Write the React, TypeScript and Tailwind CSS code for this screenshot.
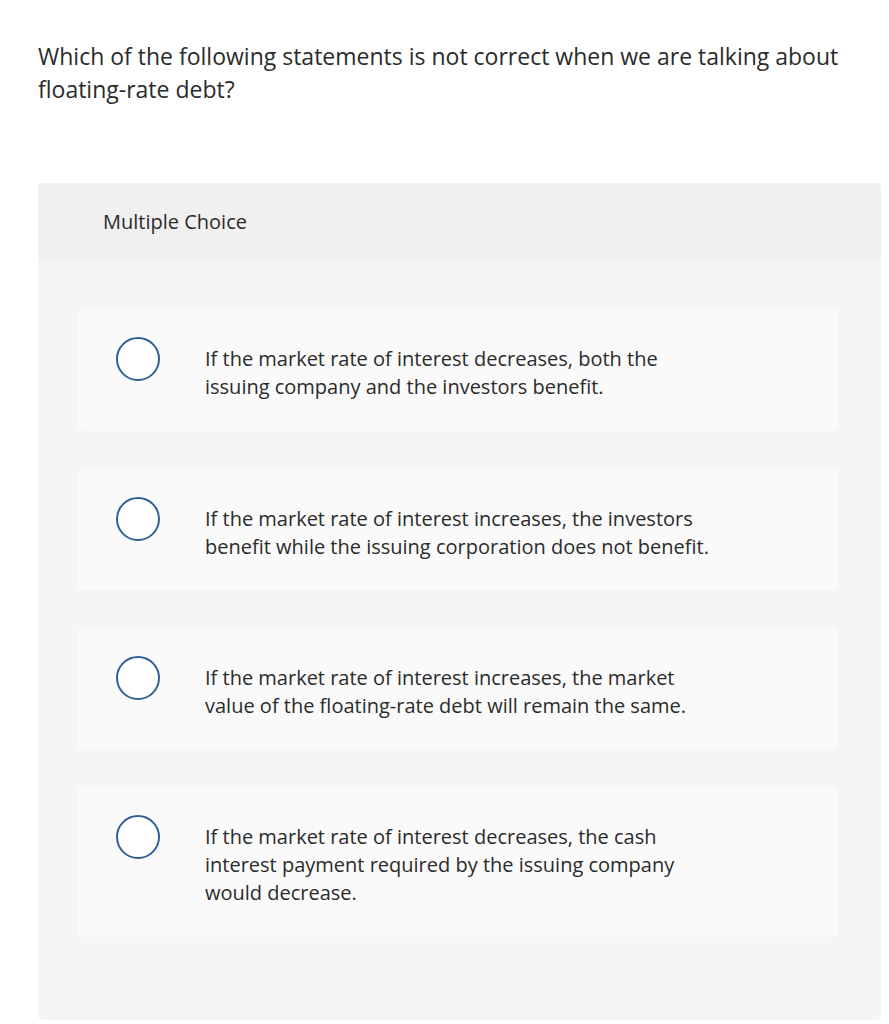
const options = [
  ["If the market rate of interest decreases, both the", "issuing company and the investors benefit."],
  ["If the market rate of interest increases, the investors", "benefit while the issuing corporation does not benefit."],
  ["If the market rate of interest increases, the market", "value of the floating-rate debt will remain the same."],
  ["If the market rate of interest decreases, the cash", "interest payment required by the issuing company", "would decrease."],
];

const heights = ["h-[122px]", "h-[121px]", "h-[121px]", "h-[150px]"];

export default function App() {
  return (
    <div className="min-h-screen w-[889px] bg-white text-[#333] font-['Open_Sans',sans-serif]">
      <div className="pl-[38px] pr-[20px] pt-[40px]">
        <p className="text-[23px] leading-[33px] text-[#2b2b2b] whitespace-nowrap">
          Which of the following statements is not correct when we are talking about
          <br />
          floating-rate debt?
        </p>
      </div>

      <div className="ml-[38px] mt-[77px] w-[843px] h-[837px] rounded-[5px] bg-[#f5f5f5] overflow-hidden">
        <div className="h-[77px] bg-[#f0f0f0] flex items-center pl-[65px]">
          <span className="text-[20px] text-[#2b2b2b]">Multiple Choice</span>
        </div>

        <div className="flex flex-col gap-[38px] pt-[49px] pl-[39px] pr-[42px]">
          {options.map((lines, i) => (
            <div
              key={i}
              className={`flex items-start rounded-[5px] bg-[#fafafa] pl-[39px] pt-[28px] ${heights[i]}`}
            >
              <div className="w-[44px] h-[44px] shrink-0 rounded-full border-2 border-[#2f5f96] bg-white" />
              <div className="ml-[45px] pt-[8px] text-[20px] leading-[28px] text-[#2b2b2b] whitespace-nowrap">
                {lines.map((l, j) => (
                  <div key={j}>{l}</div>
                ))}
              </div>
            </div>
          ))}
        </div>
      </div>
    </div>
  );
}
